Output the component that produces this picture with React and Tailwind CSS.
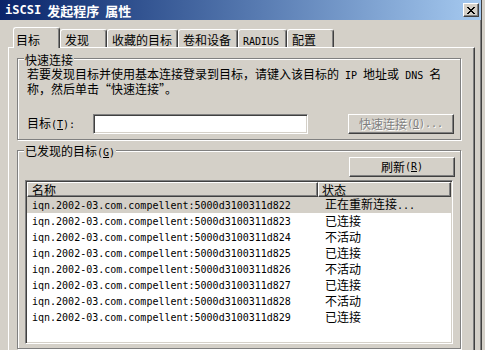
import React from "react";

const Mono = ({ children, className = "" }) => (
  <span className={"font-['DejaVu_Sans_Mono',monospace] text-[10px] leading-[12px] " + className}>{children}</span>
);

const raised =
  "border border-white border-r-[#404040] border-b-[#404040] shadow-[inset_-1px_-1px_0_#808080] bg-[#d4d0c8]";
const sunken =
  "border border-[#808080] border-r-white border-b-white shadow-[inset_1px_1px_0_#404040,inset_-1px_-1px_0_#d4d0c8] bg-white";
const etched =
  "border border-[#808080] shadow-[inset_1px_1px_0_#fff,1px_1px_0_#fff]";

function CloseBtn() {
  return (
    <div className={"w-[16px] h-[14px] flex items-center justify-center " + raised}>
      <svg width="8" height="7" viewBox="0 0 8 7" shapeRendering="crispEdges">
        <path
          fill="#000"
          d="M0 0h2v1H0zM6 0h2v1H6zM1 1h2v1H1zM5 1h2v1H5zM2 2h4v1H2zM3 3h2v1H3zM2 4h4v1H2zM1 5h2v1H1zM5 5h2v1H5zM0 6h2v1H0zM6 6h2v1H6z"
        />
      </svg>
    </div>
  );
}

function Tab({ children, w, selected }) {
  if (selected) {
    return (
      <div
        className={
          "relative z-10 -mb-px h-[21px] bg-[#d4d0c8] border-l border-t border-white border-r border-r-[#404040] shadow-[inset_-1px_0_0_#808080] rounded-t-[3px] pl-[2px] pt-[6px] shrink-0 " +
          w
        }
      >
        {children}
      </div>
    );
  }
  return (
    <div
      className={
        "h-[18px] bg-[#d4d0c8] border-l border-t border-white border-r border-r-[#404040] shadow-[inset_-1px_0_0_#808080] rounded-t-[3px] pl-[4px] pt-[4px] shrink-0 " +
        w
      }
    >
      {children}
    </div>
  );
}

const rows = [
  ["d822", "正在重新连接", true],
  ["d823", "已连接"],
  ["d824", "不活动"],
  ["d825", "已连接"],
  ["d826", "不活动"],
  ["d827", "已连接"],
  ["d828", "不活动"],
  ["d829", "已连接"],
];

export default function App() {
  return (
    <div className="w-[485px] h-[350px] overflow-hidden bg-[#d4d0c8] font-['Noto_Sans_CJK_SC',sans-serif] text-[12px] leading-[12px] text-black">
      <div className="w-[482px] h-[350px] flex flex-col border-r border-[#404040] shadow-[inset_-1px_0_0_#808080]">
        {/* Title bar */}
        <div className="h-[20px] shrink-0 flex items-center justify-between bg-linear-to-r from-[#0a246a] to-[#a6caf0] pl-[5px] pr-[2px]">
          <div className="text-white font-bold text-[13px] leading-[13px] flex items-center">
            <span className="font-['DejaVu_Sans_Mono',monospace] text-[12px]">iSCSI</span>
            <span className="ml-[6px]">发起程序</span>
            <span className="ml-[6px]">属性</span>
          </div>
          <CloseBtn />
        </div>

        {/* Body */}
        <div className="flex-1 flex flex-col pt-[7px] pl-[8px] pr-[6px] min-h-0">
          {/* Tabs */}
          <div className="h-[20px] flex items-end pl-[5px] shrink-0">
            <Tab selected w="w-[47px]">目标</Tab>
            <Tab w="w-[47px]">发现</Tab>
            <Tab w="w-[71px]">收藏的目标</Tab>
            <Tab w="w-[60px]">卷和设备</Tab>
            <Tab w="w-[49px]">
              <Mono>RADIUS</Mono>
            </Tab>
            <Tab w="w-[47px]">配置</Tab>
          </div>

          {/* Panel */}
          <div className="h-[320px] shrink-0 flex flex-col border-t border-l border-white border-r border-r-[#404040] shadow-[inset_-1px_0_0_#808080] pl-[8px] pt-[10px]">
            {/* Group 1 */}
            <div className={"relative w-[444px] h-[82px] shrink-0 pl-[9px] pt-[8px] " + etched}>
              <div className="absolute left-[6px] top-[-5px] px-[1px] bg-[#d4d0c8]">快速连接</div>
              <div className="leading-[13px]">
                <div className="whitespace-nowrap">
                  若要发现目标并使用基本连接登录到目标，请键入该目标的<Mono className="whitespace-pre"> IP </Mono>地址或<Mono className="whitespace-pre"> DNS </Mono>名
                </div>
                <div className="whitespace-nowrap">称，然后单击“快速连接”。</div>
              </div>
              <div className="flex items-center h-[20px] mt-[19px]">
                <div className="w-[66px] shrink-0">
                  目标<Mono>(<u>T</u>):</Mono>
                </div>
                <div className={"w-[215px] h-[20px] shrink-0 " + sunken}></div>
                <div
                  className={
                    "ml-[40px] w-[106px] h-[20px] shrink-0 flex items-center justify-center text-[#808080] [text-shadow:1px_1px_0_#fff] " +
                    raised
                  }
                >
                  快速连接<Mono>(<u>Q</u>)...</Mono>
                </div>
              </div>
            </div>

            {/* Group 2 */}
            <div className={"relative mt-[10px] w-[444px] h-[199px] shrink-0 pl-[7px] pt-[6px] " + etched}>
              <div className="absolute left-[6px] top-[-6px] px-[1px] bg-[#d4d0c8]">
                已发现的目标<Mono>(<u>G</u>)</Mono>
              </div>
              <div className="flex justify-end pr-[5px]">
                <div className={"w-[106px] h-[20px] flex items-center justify-center " + raised}>
                  刷新<Mono>(<u>R</u>)</Mono>
                </div>
              </div>
              <div className={"mt-[3px] w-[428px] h-[164px] p-[1px] " + sunken}>
                <div className="h-[15px] flex">
                  <div className={"w-[291px] h-[15px] flex items-center pl-[4px] " + raised}>名称</div>
                  <div className={"flex-1 h-[15px] flex items-center pl-[3px] " + raised}>状态</div>
                </div>
                {rows.map(([suffix, status, sel]) => (
                  <div key={suffix} className={"h-[16px] flex items-center " + (sel ? "bg-[#d4d0c8]" : "")}>
                    <div className="w-[291px] pl-[5px] whitespace-nowrap">
                      <Mono>{"iqn.2002-03.com.compellent:5000d3100311" + suffix}</Mono>
                    </div>
                    <div className="flex-1 pl-[7px] whitespace-nowrap">
                      {status}
                      {sel ? <Mono>...</Mono> : null}
                    </div>
                  </div>
                ))}
              </div>
            </div>
          </div>
        </div>
      </div>
    </div>
  );
}
